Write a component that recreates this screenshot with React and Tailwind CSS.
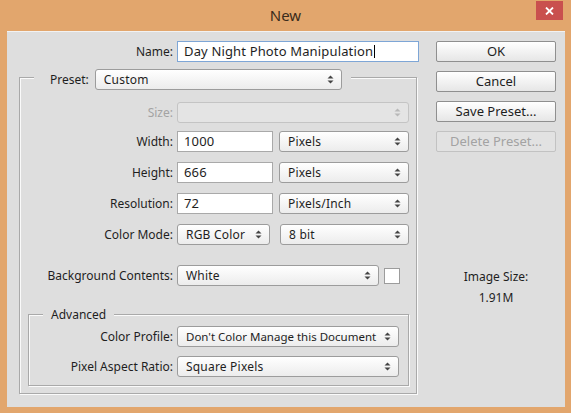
const font = { fontFamily: '"Noto Sans", "DejaVu Sans", sans-serif' };

function Arrows({ disabled }) {
  const c = disabled ? "#b8b8b8" : "#444";
  return (
    <svg width="7" height="9" viewBox="0 0 7 9" className="shrink-0">
      <path d="M3.5 0.5 L6.5 3.5 L0.5 3.5 Z" fill={c} />
      <path d="M3.5 8.5 L6.5 5.5 L0.5 5.5 Z" fill={c} />
    </svg>
  );
}

function Select({ w, value, disabled, tight }) {
  return (
    <div
      className={
        "h-[21px] shrink-0 flex items-center justify-between pl-[8px] pr-[7px] rounded-[3px] border " +
        (disabled
          ? "border-[#c4c4c4] bg-[#e4e4e4]"
          : "border-[#9c9c9c] bg-gradient-to-b from-white to-[#ececec]")
      }
      style={{ width: w }}
    >
      <span
        className={
          "text-[#1e1e1e] leading-none whitespace-nowrap " +
          (tight ? "text-[11.5px]" : "text-[12px] tracking-[0.2px]")
        }
      >
        {value}
      </span>
      <Arrows disabled={disabled} />
    </div>
  );
}

function Input({ w, value }) {
  return (
    <div
      className="h-[21px] shrink-0 flex items-center pl-[6px] bg-white border border-[#a9a9a9] text-[13px] tracking-[0.15px] text-[#1e1e1e]"
      style={{ width: w }}
    >
      {value}
    </div>
  );
}

function Row({ label, lw, mt, disabled, children }) {
  return (
    <div className="flex items-center h-[21px]" style={{ marginTop: mt }}>
      <div
        className={"shrink-0 text-right pr-[4px] text-[12px] whitespace-nowrap " + (disabled ? "text-[#a3a3a3]" : "text-[#1e1e1e]")}
        style={{ width: lw }}
      >
        {label}
      </div>
      {children}
    </div>
  );
}

function Button({ label, disabled }) {
  return (
    <div
      className={
        "w-[120px] h-[21px] flex items-center justify-center rounded-[2px] border text-[13px] " +
        (disabled
          ? "border-[#c2c2c2] text-[#a3a3a3] bg-[#e2e2e2]"
          : "border-[#8f8f8f] text-[#1e1e1e] bg-gradient-to-b from-white to-[#e6e6e6]")
      }
    >
      {label}
    </div>
  );
}

export default function App() {
  return (
    <div className="w-[571px] h-[413px] bg-[#e2a66d] relative overflow-hidden" style={font}>
      <div className="h-[31px] flex items-center justify-center text-[15px] text-[#3b2c1c]">New</div>
      <div className="absolute left-[536px] top-[1px] w-[27px] h-[19px] bg-[#c9504e] flex items-center justify-center">
        <svg width="9" height="8" viewBox="0 0 9 8">
          <path d="M1 0.5 L8 7.5 M8 0.5 L1 7.5" stroke="white" strokeWidth="1.8" />
        </svg>
      </div>

      <div className="ml-[7px] w-[558px] h-[376px] bg-[#dedede] border-t border-[#f2f2f2] flex">
        <div className="w-[418px] flex flex-col">
          <Row label="Name:" lw={170} mt={9}>
            <div className="w-[242px] h-[21px] flex items-center pl-[6px] bg-white border border-[#7ea6d6] text-[13px] tracking-[0.15px] text-[#1e1e1e] whitespace-nowrap">
              Day Night Photo Manipulation
              <span className="w-px h-[13px] bg-black ml-[1px]" />
            </div>
          </Row>

          <div className="ml-[12px] mt-[15px] w-[398px] h-[317px] border border-[#a9a9a9] shadow-[inset_1px_1px_0_#fafafa,1px_1px_0_#fafafa] flex flex-col">
            <div className="-mt-[9px] ml-[14px] self-start flex items-center h-[21px] bg-[#dedede] pl-[16px] pr-[9px]">
              <span className="text-[12px] text-[#1e1e1e] mr-[6px]">Preset:</span>
              <Select w={247} value="Custom" />
            </div>

            <Row label="Size:" lw={157} mt={12} disabled>
              <Select w={232} value="" disabled />
            </Row>
            <Row label="Width:" lw={157} mt={8}>
              <Input w={96} value="1000" />
              <div className="ml-[6px]">
                <Select w={130} value="Pixels" />
              </div>
            </Row>
            <Row label="Height:" lw={157} mt={10}>
              <Input w={96} value="666" />
              <div className="ml-[6px]">
                <Select w={130} value="Pixels" />
              </div>
            </Row>
            <Row label="Resolution:" lw={157} mt={10}>
              <Input w={96} value="72" />
              <div className="ml-[6px]">
                <Select w={130} value="Pixels/Inch" />
              </div>
            </Row>
            <Row label="Color Mode:" lw={157} mt={10}>
              <Select w={93} value="RGB Color" />
              <div className="ml-[10px]">
                <Select w={129} value="8 bit" />
              </div>
            </Row>
            <Row label="Background Contents:" lw={157} mt={20}>
              <Select w={202} value="White" />
              <div className="ml-[5px] w-[16px] h-[16px] bg-white border border-[#9c9c9c]" />
            </Row>

            <div className="ml-[8px] mt-[28px] w-[381px] h-[72px] border border-[#a9a9a9] shadow-[inset_1px_1px_0_#fafafa,1px_1px_0_#fafafa] flex flex-col">
              <div className="-mt-[9px] ml-[14px] self-start bg-[#dedede] px-[8px] text-[12px] text-[#1e1e1e] h-[17px] leading-[17px]">
                Advanced
              </div>
              <Row label="Color Profile:" lw={148} mt={3}>
                <Select w={222} value="Don't Color Manage this Document" tight />
              </Row>
              <Row label="Pixel Aspect Ratio:" lw={148} mt={9}>
                <Select w={222} value="Square Pixels" />
              </Row>
            </div>
          </div>
        </div>

        <div className="ml-[11px] flex flex-col">
          <div className="mt-[9px] flex flex-col gap-[9px]">
            <Button label="OK" />
            <Button label="Cancel" />
            <Button label="Save Preset..." />
            <Button label="Delete Preset..." disabled />
          </div>
          <div className="mt-[116px] text-center text-[12px] text-[#1e1e1e]">Image Size:</div>
          <div className="mt-[3px] text-center text-[12px] text-[#1e1e1e]">1.91M</div>
        </div>
      </div>
    </div>
  );
}
